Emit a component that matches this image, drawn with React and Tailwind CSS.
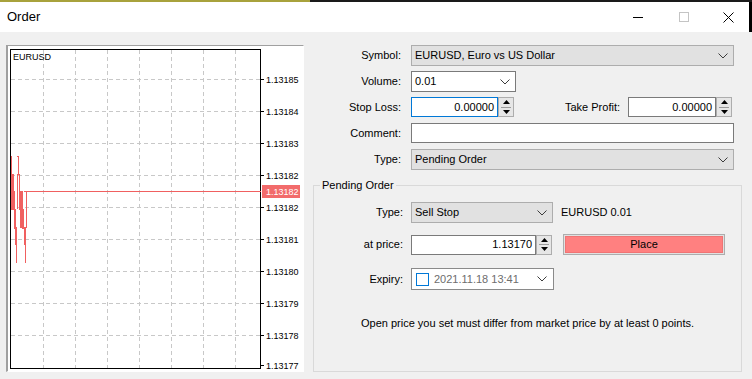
import React from "react";

function Chevron() {
  return (
    <svg width="10" height="6" viewBox="0 0 10 6" className="block">
      <polyline points="0.5,0.5 5,5 9.5,0.5" fill="none" stroke="#3c3c3c" strokeWidth="1" />
    </svg>
  );
}

function Spinner() {
  return (
    <div className="flex h-[20px] w-[16px] flex-col border border-[#adadad] bg-[#e6e6e6]">
      <div className="flex flex-1 items-center justify-center">
        <svg width="7" height="4" className="block">
          <polygon points="3.5,0 7,4 0,4" fill="#000" />
        </svg>
      </div>
      <div className="mx-[2px] h-[1px] bg-[#9a9a9a]" />
      <div className="flex flex-1 items-center justify-center">
        <svg width="7" height="4" className="block">
          <polygon points="0,0 7,0 3.5,4" fill="#000" />
        </svg>
      </div>
    </div>
  );
}

const gridX = [43, 75, 107, 139, 171, 203, 235];
const gridY = [79, 111, 143, 175, 207, 239, 271, 303, 335];
const labels = [
  [79, "1.13185"],
  [111, "1.13184"],
  [143, "1.13183"],
  [175, "1.13182"],
  [207, "1.13182"],
  [239, "1.13181"],
  [271, "1.13180"],
  [303, "1.13179"],
  [335, "1.13178"],
  [365, "1.13177"],
];
const segs = [
  [11, 156, 209],
  [12, 174, 209],
  [13, 174, 209],
  [14, 191, 228],
  [15, 209, 245],
  [16, 227, 263],
  [17, 174, 209],
  [18, 156, 174],
  [19, 174, 209],
  [20, 191, 228],
  [21, 191, 228],
  [22, 191, 228],
  [23, 209, 228],
  [24, 227, 245],
  [25, 227, 263],
  [26, 191, 228],
];
const hsegs = [
  [11, 13, 174],
  [11, 12, 209],
  [13, 15, 209],
  [14, 16, 228],
  [17, 19, 174],
  [17, 18, 156],
  [19, 21, 209],
  [20, 22, 191],
  [22, 24, 228],
  [24, 26, 191],
];

function Chart() {
  return (
    <div className="ml-[6px] mt-[13px] h-[327px] w-[298px] border-b border-l-2 border-r border-t border-b-white border-l-[#a0a0a0] border-r-white border-t-[#a0a0a0] bg-white">
      <svg width="295" height="325" className="block">
        <g transform="translate(-8 -46)">
          {gridX.map((x) => (
            <line key={"v" + x} x1={x + 0.5} y1={50} x2={x + 0.5} y2={368} stroke="#c8c8c8" strokeDasharray="4 3" />
          ))}
          {gridY.map((y) => (
            <line key={"h" + y} x1={11} y1={y + 0.5} x2={260} y2={y + 0.5} stroke="#c8c8c8" strokeDasharray="4 3" />
          ))}
          <rect x={10.5} y={49.5} width={250} height={319} fill="none" stroke="#000" strokeWidth="1" />
          {labels.map(([y, t], i) => (
            <g key={"l" + i}>
              <line x1={261} y1={y + 0.5} x2={264} y2={y + 0.5} stroke="#000" />
              <text x={266} y={y + 4} fontSize="9" fontFamily="'Liberation Sans', Arial, sans-serif" fill="#000">
                {t}
              </text>
            </g>
          ))}
          <text x={13} y={60} fontSize="9" fontFamily="'Liberation Sans', Arial, sans-serif" fill="#000">
            EURUSD
          </text>
          {segs.map(([x, a, b], i) => (
            <line key={"s" + i} x1={x + 0.5} y1={a} x2={x + 0.5} y2={b} stroke="#f06060" />
          ))}
          {hsegs.map(([a, b, y], i) => (
            <line key={"hs" + i} x1={a} y1={y + 0.5} x2={b + 1} y2={y + 0.5} stroke="#f06060" />
          ))}
          <line x1={26} y1={191.5} x2={261} y2={191.5} stroke="#f06060" />
          <rect x={262} y={185} width={38} height={13} fill="#f26b6b" />
          <text x={266} y={195} fontSize="9" fontFamily="'Liberation Sans', Arial, sans-serif" fill="#fff">
            1.13182
          </text>
        </g>
      </svg>
    </div>
  );
}

export default function App() {
  return (
    <div className="h-[379px] w-[752px] overflow-hidden bg-[#f0f0f0] font-['Liberation_Sans',Arial,sans-serif] text-[11px] text-black">
      <div className="flex h-[2px]">
        <div className="w-[310px] bg-[#a8a23c]" />
        <div className="flex-1 bg-[#1a1a1a]" />
      </div>
      <div className="flex h-[30px] items-center bg-white">
        <span className="ml-[7px] text-[13px]">Order</span>
        <div className="ml-auto flex h-full">
          <div className="flex w-[46px] items-center justify-center">
            <div className="h-[1px] w-[10px] bg-black" />
          </div>
          <div className="flex w-[46px] items-center justify-center">
            <div className="h-[10px] w-[10px] border border-[#c4c4c4]" />
          </div>
          <div className="flex w-[42px] items-center justify-center">
            <svg width="11" height="11" viewBox="0 0 11 11" className="block">
              <path d="M0.5 0.5 L10.5 10.5 M10.5 0.5 L0.5 10.5" stroke="#000" strokeWidth="1" />
            </svg>
          </div>
        </div>
        <div className="h-full w-[3px] bg-black" />
      </div>
      <div className="flex">
        <Chart />
        <div className="flex w-[448px] flex-col pt-[13px]">
          <div className="flex h-[21px] items-center">
            <div className="w-[97px] text-right">Symbol:</div>
            <div className="ml-[10px] flex h-full w-[323px] items-center justify-between border border-[#adadad] bg-[#e1e1e1] pl-[3px] pr-[5px]">
              <span>EURUSD, Euro vs US Dollar</span>
              <Chevron />
            </div>
          </div>
          <div className="mt-[5px] flex h-[21px] items-center">
            <div className="w-[97px] text-right">Volume:</div>
            <div className="ml-[10px] flex h-full w-[105px] items-center justify-between border border-[#7a7a7a] bg-white pl-[3px] pr-[5px]">
              <span>0.01</span>
              <Chevron />
            </div>
          </div>
          <div className="mt-[5px] flex h-[20px] items-center">
            <div className="w-[97px] text-right">Stop Loss:</div>
            <div className="ml-[10px] flex h-full w-[87px] items-center justify-end border border-[#0078d7] bg-white pr-[3px]">
              0.00000
            </div>
            <Spinner />
            <div className="w-[106px] text-right">Take Profit:</div>
            <div className="ml-[8px] flex h-full w-[88px] items-center justify-end border border-[#7a7a7a] bg-white pr-[3px]">
              0.00000
            </div>
            <Spinner />
          </div>
          <div className="mt-[6px] flex h-[20px] items-center">
            <div className="w-[97px] text-right">Comment:</div>
            <div className="ml-[10px] h-full w-[323px] border border-[#7a7a7a] bg-white" />
          </div>
          <div className="mt-[6px] flex h-[21px] items-center">
            <div className="w-[97px] text-right">Type:</div>
            <div className="ml-[10px] flex h-full w-[323px] items-center justify-between border border-[#adadad] bg-[#e1e1e1] pl-[3px] pr-[5px]">
              <span>Pending Order</span>
              <Chevron />
            </div>
          </div>
          <div className="relative ml-[9px] mt-[15px] h-[187px] w-[429px] border border-[#d9d9d9] pt-[16px]">
            <span className="absolute -top-[8px] left-[6px] bg-[#f0f0f0] px-[2px] leading-[14px]">Pending Order</span>
            <div className="flex h-[21px] items-center">
              <div className="w-[89px] text-right">Type:</div>
              <div className="ml-[8px] flex h-full w-[142px] items-center justify-between border border-[#adadad] bg-[#e1e1e1] pl-[3px] pr-[5px]">
                <span>Sell Stop</span>
                <Chevron />
              </div>
              <span className="ml-[8px]">EURUSD 0.01</span>
            </div>
            <div className="mt-[11px] flex h-[21px] items-center">
              <div className="w-[89px] text-right">at price:</div>
              <div className="ml-[8px] flex h-[20px] w-[125px] items-center justify-end border border-[#7a7a7a] bg-white pr-[3px]">
                1.13170
              </div>
              <Spinner />
              <div className="ml-[11px] h-[21px] w-[162px] border border-[#adadad] bg-[#e1e1e1] p-[1px]">
                <div className="flex h-full items-center justify-center border border-[#f07474] bg-[#ff8080]">Place</div>
              </div>
            </div>
            <div className="mt-[13px] flex h-[22px] items-center">
              <div className="w-[89px] text-right">Expiry:</div>
              <div className="ml-[8px] flex h-full w-[143px] items-center border border-[#8a8a8a] bg-white pr-[6px]">
                <div className="ml-[4px] h-[13px] w-[13px] border border-[#0078d7] bg-white" />
                <span className="ml-[5px] text-[#6d6d6d]">2021.11.18 13:41</span>
                <div className="ml-auto">
                  <Chevron />
                </div>
              </div>
            </div>
            <div className="mt-[26px] text-center leading-[14px]">
              Open price you set must differ from market price by at least 0 points.
            </div>
          </div>
        </div>
      </div>
    </div>
  );
}
